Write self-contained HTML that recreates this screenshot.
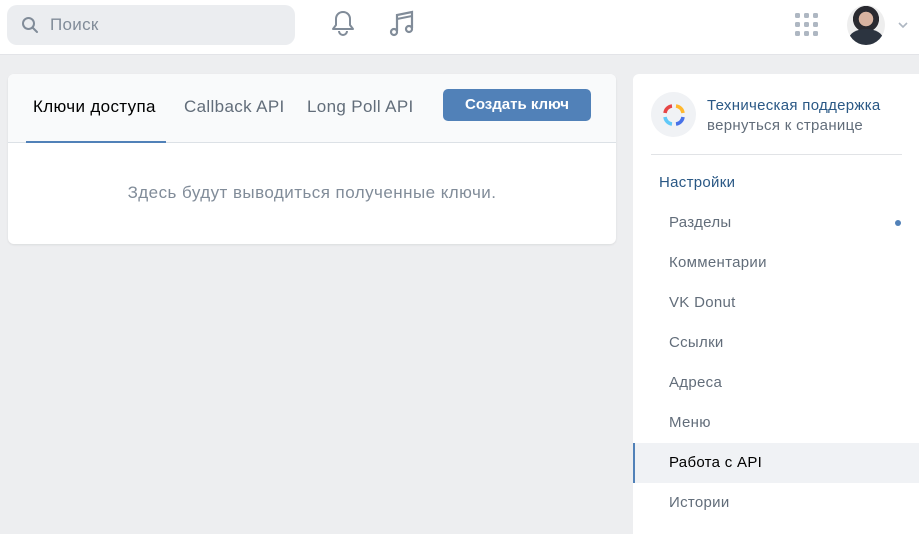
<!DOCTYPE html>
<html><head><meta charset="utf-8"><style>
*{box-sizing:border-box;margin:0;padding:0}
body{width:919px;height:523px;overflow:hidden;background:#edeef0;font-family:"Liberation Sans",Arial,sans-serif;position:relative}
.top{position:absolute;left:0;top:0;width:919px;height:55px;background:#fff;border-bottom:1px solid #e3e4e8}
.search{position:absolute;left:7px;top:5px;width:288px;height:40px;background:#ebedf0;border-radius:10px}
.search span{position:absolute;left:43px;top:10px;font-size:17px;color:#818c99;letter-spacing:.3px}
.card{position:absolute;left:8px;top:74px;width:608px;height:170px;background:#fff;border-radius:6px;box-shadow:0 1px 2px rgba(0,0,0,.08)}
.tabs{height:69px;background:#f9fafb;border-bottom:1px solid #dce1e6;border-radius:6px 6px 0 0;position:relative}
.tab{position:absolute;top:23px;font-size:17px;color:#626d7a;letter-spacing:.35px}
.btn{position:absolute;left:435px;top:15px;width:148px;height:32px;background:#5181b8;border-radius:5px;color:#fff;font-size:15px;font-weight:bold;text-align:center;line-height:32px}
.empty{text-align:center;font-size:17px;color:#818c99;margin-top:40px;letter-spacing:.45px}
.side{position:absolute;left:633px;top:74px;width:286px;height:460px;background:#fff;border-radius:6px 0 0 0}
.item{position:absolute;left:36px;font-size:15px;color:#626d7a;letter-spacing:.3px}
</style></head><body>
<div class="top">
<div class="search"><svg style="position:absolute;left:14px;top:11px" width="18" height="18" viewBox="0 0 18 18"><circle cx="7.5" cy="7.5" r="5.5" fill="none" stroke="#818c99" stroke-width="2"/><path d="M11.5 11.5L16 16" stroke="#818c99" stroke-width="2" stroke-linecap="round"/></svg><span>Поиск</span></div>
<svg style="position:absolute;left:330px;top:9px" width="26" height="28" viewBox="0 0 26 28"><path d="M13 3c-4 0-7 3-7 7v6l-3 4h20l-3-4v-6c0-4-3-7-7-7z" fill="none" stroke="#818c99" stroke-width="2" stroke-linejoin="round"/><path d="M9 22a4 4 0 0 0 8 0" fill="none" stroke="#818c99" stroke-width="2"/></svg>
<svg style="position:absolute;left:388px;top:9px" width="28" height="28" viewBox="0 0 28 28"><path d="M9 22V6l15-3v16" fill="none" stroke="#818c99" stroke-width="2.2"/><path d="M9 10l15-3" stroke="#818c99" stroke-width="2"/><circle cx="6" cy="23" r="3" fill="none" stroke="#818c99" stroke-width="2.2"/><circle cx="21" cy="20" r="3" fill="none" stroke="#818c99" stroke-width="2.2"/></svg>
<svg style="position:absolute;left:795px;top:13px" width="24" height="24" viewBox="0 0 24 24" fill="#aeb7c2"><rect x="0" y="0" width="5" height="5" rx="1.5"/><rect x="9" y="0" width="5" height="5" rx="1.5"/><rect x="18" y="0" width="5" height="5" rx="1.5"/><rect x="0" y="9" width="5" height="5" rx="1.5"/><rect x="9" y="9" width="5" height="5" rx="1.5"/><rect x="18" y="9" width="5" height="5" rx="1.5"/><rect x="0" y="18" width="5" height="5" rx="1.5"/><rect x="9" y="18" width="5" height="5" rx="1.5"/><rect x="18" y="18" width="5" height="5" rx="1.5"/></svg>
<div style="position:absolute;left:847px;top:5px;width:38px;height:40px;border-radius:50%;background:radial-gradient(circle at 50% 35%,#d9b3a0 0 22%,#2a2a30 23% 40%,#eee 41%);overflow:hidden"><div style="position:absolute;left:2px;top:24px;width:34px;height:20px;background:#2c3440;border-radius:50% 50% 0 0"></div></div>
<svg style="position:absolute;left:897px;top:21px" width="12" height="8"><path d="M2 2l4 4 4-4" fill="none" stroke="#aeb7c2" stroke-width="1.6"/></svg>
</div>
<div class="card"><div class="tabs">
<div class="tab" style="left:25px;color:#000">Ключи доступа</div>
<div style="position:absolute;left:18px;bottom:-1px;width:140px;height:2px;background:#5181b8"></div>
<div class="tab" style="left:176px">Callback API</div>
<div class="tab" style="left:299px">Long Poll API</div>
<div class="btn">Создать ключ</div></div>
<div class="empty">Здесь будут выводиться полученные ключи.</div></div>
<div class="side">
<div style="position:absolute;left:18px;top:18px;width:45px;height:45px;border-radius:50%;background:#f0f2f5"></div>
<svg style="position:absolute;left:29px;top:29px" width="24" height="24" viewBox="0 0 24 24" fill="none" stroke-width="3.5"><path d="M3 10a8 8 0 0 1 7-7" stroke="#e64646"/><path d="M14 3a8 8 0 0 1 7 7" stroke="#ffb82e"/><path d="M21 14a8 8 0 0 1-7 7" stroke="#4872e8"/><path d="M10 21a8 8 0 0 1-7-7" stroke="#5fc8f8"/></svg>
<div style="position:absolute;left:74px;top:22px;font-size:15px;color:#2a5885;line-height:20px;letter-spacing:.3px">Техническая поддержка<br><span style="color:#626d7a">вернуться к странице</span></div>
<div style="position:absolute;left:18px;top:80px;width:251px;height:1px;background:#e1e3e6"></div>
<div class="item" style="left:26px;top:100px;color:#2a5885">Настройки</div>
<div class="item" style="top:140px">Разделы</div>
<div style="position:absolute;left:262px;top:146px;width:6px;height:6px;border-radius:50%;background:#5181b8"></div>
<div class="item" style="top:180px">Комментарии</div>
<div class="item" style="top:220px">VK Donut</div>
<div class="item" style="top:260px">Ссылки</div>
<div class="item" style="top:300px">Адреса</div>
<div class="item" style="top:340px">Меню</div>
<div style="position:absolute;left:0;top:369px;width:286px;height:40px;background:#f0f2f5;border-left:2px solid #5181b8"></div>
<div class="item" style="top:380px;color:#000">Работа с API</div>
<div class="item" style="top:420px">Истории</div>
</div>
</body></html>
